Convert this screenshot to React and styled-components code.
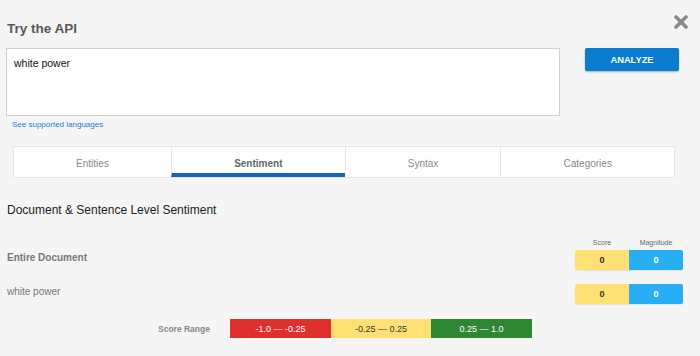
import styled, { createGlobalStyle } from 'styled-components';

const GlobalStyle = createGlobalStyle`
  html, body {
    margin: 0;
    padding: 0;
    background: #f5f5f5;
    font-family: "Liberation Sans", Arial, Helvetica, sans-serif;
  }
`;

const Page = styled.div`
  width: 700px;
  height: 356px;
  box-sizing: border-box;
  padding: 0 17px 0 6px;
  overflow: hidden;
`;

const Header = styled.div`
  display: flex;
  justify-content: space-between;
  align-items: flex-start;
  height: 48px;
  padding: 15px 12px 0 1px;
  box-sizing: border-box;
  margin-right: -17px;
`;

const Title = styled.h1`
  margin: 6px 0 0;
  font-size: 13.5px;
  line-height: 16px;
  font-weight: bold;
  color: #585858;
`;

const CloseButton = styled.button`
  border: none;
  background: none;
  padding: 0;
  width: 14px;
  height: 14px;
  cursor: pointer;
  svg { display: block; }
`;

const InputRow = styled.div`
  display: flex;
  align-items: flex-start;
`;

const TextBox = styled.div`
  width: 554px;
  height: 68px;
  box-sizing: border-box;
  background: #fff;
  border: 1px solid #cfcfcf;
  padding: 7px 7px;
  font-size: 10.5px;
  line-height: 14px;
  color: #111;
`;

const AnalyzeButton = styled.button`
  margin-left: 25px;
  width: 94px;
  height: 23px;
  border: none;
  border-radius: 2px;
  background: #0a7bcf;
  color: #fff;
  font-family: inherit;
  font-size: 9.3px;
  font-weight: bold;
  box-shadow: 0 1px 2px rgba(0, 0, 0, 0.3);
  cursor: pointer;
`;

const LangLink = styled.a`
  display: block;
  margin: 3px 0 0 6px;
  font-size: 8px;
  line-height: 12px;
  color: #1a7fd6;
  text-decoration: none;
`;

const Tabs = styled.div`
  display: flex;
  width: 662px;
  margin: 15px 0 0 7px;
  background: #fff;
  border: 1px solid #e6e6e6;
  box-sizing: border-box;
  height: 32px;
`;

const Tab = styled.div`
  flex: 1 1 auto;
  display: flex;
  align-items: center;
  justify-content: center;
  box-sizing: border-box;
  border-left: ${p => (p.$first ? 'none' : '1px solid #e6e6e6')};
  border-bottom: 4px solid ${p => (p.$active ? '#1565c0' : 'transparent')};
  padding-top: 6px;
  font-size: 10px;
  color: ${p => (p.$active ? '#666' : '#888')};
  font-weight: ${p => (p.$active ? 'bold' : 'normal')};
`;

const SectionTitle = styled.h2`
  margin: 25px 0 0 1px;
  font-size: 12px;
  line-height: 14px;
  font-weight: normal;
  color: #222;
`;

const ColumnHeads = styled.div`
  display: flex;
  justify-content: flex-end;
  margin-top: 21px;
  height: 10px;
`;

const ColumnHead = styled.div`
  width: 54px;
  text-align: center;
  font-size: 7px;
  line-height: 10px;
  color: #666;
`;

const ResultRow = styled.div`
  display: flex;
  justify-content: space-between;
  align-items: flex-start;
  margin-top: ${p => p.$gap}px;
`;

const RowLabel = styled.div`
  padding: 2px 0 0 1px;
  font-size: 10px;
  line-height: 12px;
  color: #777;
  font-weight: ${p => (p.$bold ? 'bold' : 'normal')};
`;

const Pills = styled.div`
  display: flex;
  border-radius: 2px;
  overflow: hidden;
  box-shadow: 0 1px 1px rgba(0, 0, 0, 0.08);
`;

const Pill = styled.div`
  width: 54px;
  height: 20px;
  display: flex;
  align-items: center;
  justify-content: center;
  font-size: 9px;
  font-weight: bold;
  background: ${p => p.$bg};
  color: ${p => p.$fg};
`;

const RangeRow = styled.div`
  display: flex;
  align-items: center;
  margin: 15px 0 0 152px;
`;

const RangeLabel = styled.div`
  margin-right: 20px;
  font-size: 8.5px;
  font-weight: bold;
  color: #888;
`;

const RangeBox = styled.div`
  width: ${p => p.$w}px;
  height: 19px;
  display: flex;
  align-items: center;
  justify-content: center;
  font-size: 9px;
  background: ${p => p.$bg};
  color: ${p => p.$fg};
`;

const YELLOW = '#ffe074';
const BLUE = '#28aef5';

const results = [
  { label: 'Entire Document', bold: true, score: 0, magnitude: 0, gap: 2 },
  { label: 'white power', bold: false, score: 0, magnitude: 0, gap: 14 },
];

const ranges = [
  { text: '-1.0 — -0.25', bg: '#e0302e', fg: '#fff', w: 101 },
  { text: '-0.25 — 0.25', bg: YELLOW, fg: '#333', w: 100 },
  { text: '0.25 — 1.0', bg: '#2e8731', fg: '#fff', w: 101 },
];

const tabs = ['Entities', 'Sentiment', 'Syntax', 'Categories'];

export default function App() {
  return (
    <>
      <GlobalStyle />
      <Page>
        <Header>
          <Title>Try the API</Title>
          <CloseButton aria-label="Close">
            <svg width="14" height="14" viewBox="0 0 14 14">
              <path d="M2 2 L12 12 M12 2 L2 12" stroke="#8a8a8a" strokeWidth="3.6" strokeLinecap="round" />
            </svg>
          </CloseButton>
        </Header>

        <InputRow>
          <TextBox>white power</TextBox>
          <AnalyzeButton>ANALYZE</AnalyzeButton>
        </InputRow>
        <LangLink href="#">See supported languages</LangLink>

        <Tabs>
          {tabs.map((t, i) => (
            <Tab key={t} $first={i === 0} $active={t === 'Sentiment'}>{t}</Tab>
          ))}
        </Tabs>

        <SectionTitle>Document &amp; Sentence Level Sentiment</SectionTitle>

        <ColumnHeads>
          <ColumnHead>Score</ColumnHead>
          <ColumnHead>Magnitude</ColumnHead>
        </ColumnHeads>

        {results.map(r => (
          <ResultRow key={r.label} $gap={r.gap}>
            <RowLabel $bold={r.bold}>{r.label}</RowLabel>
            <Pills>
              <Pill $bg={YELLOW} $fg="#333">{r.score}</Pill>
              <Pill $bg={BLUE} $fg="#fff">{r.magnitude}</Pill>
            </Pills>
          </ResultRow>
        ))}

        <RangeRow>
          <RangeLabel>Score Range</RangeLabel>
          {ranges.map(r => (
            <RangeBox key={r.text} $bg={r.bg} $fg={r.fg} $w={r.w}>{r.text}</RangeBox>
          ))}
        </RangeRow>
      </Page>
    </>
  );
}
